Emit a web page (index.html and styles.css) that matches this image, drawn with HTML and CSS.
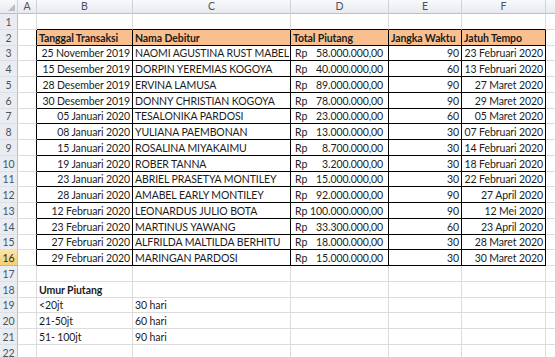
FILE: index.html
```html
<!DOCTYPE html>
<html lang="id">
<head>
<meta charset="utf-8">
<title>Piutang</title>
<link rel="stylesheet" href="styles.css">
</head>
<body>
<table class="sheet">
  <colgroup>
    <col class="c-rn"><col class="c-a"><col class="c-b"><col class="c-c"><col class="c-d"><col class="c-e"><col class="c-f"><col class="c-g">
  </colgroup>
  <thead>
    <tr class="hdr">
      <th class="corner"><span class="tri"></span></th>
      <th>A</th><th>B</th><th>C</th><th>D</th><th>E</th><th>F</th><th></th>
    </tr>
  </thead>
  <tbody>
    <tr><th class="rn">1</th><td></td><td class="bt"></td><td class="bt"></td><td class="bt"></td><td class="bt"></td><td class="bt"></td><td></td></tr>
    <tr><th class="rn">2</th><td class="bl"></td><td class="t h">Tanggal Transaksi</td><td class="t h">Nama Debitur</td><td class="t h">Total Piutang</td><td class="t h">Jangka Waktu</td><td class="t h">Jatuh Tempo</td><td></td></tr>
    <tr class="s"><th class="rn">3</th><td class="bl"></td><td class="t r">25 November 2019</td><td class="t">NAOMI AGUSTINA RUST MABEL</td><td class="t"><div class="acct"><span>Rp</span><span>58.000.000,00</span></div></td><td class="t r">90</td><td class="t r">23 Februari 2020</td><td></td></tr>
    <tr><th class="rn">4</th><td class="bl"></td><td class="t r">15 Desember 2019</td><td class="t">DORPIN YEREMIAS KOGOYA</td><td class="t"><div class="acct"><span>Rp</span><span>40.000.000,00</span></div></td><td class="t r">60</td><td class="t r">13 Februari 2020</td><td></td></tr>
    <tr><th class="rn">5</th><td class="bl"></td><td class="t r">28 Desember 2019</td><td class="t">ERVINA LAMUSA</td><td class="t"><div class="acct"><span>Rp</span><span>89.000.000,00</span></div></td><td class="t r">90</td><td class="t r">27 Maret 2020</td><td></td></tr>
    <tr><th class="rn">6</th><td class="bl"></td><td class="t r">30 Desember 2019</td><td class="t">DONNY CHRISTIAN KOGOYA</td><td class="t"><div class="acct"><span>Rp</span><span>78.000.000,00</span></div></td><td class="t r">90</td><td class="t r">29 Maret 2020</td><td></td></tr>
    <tr class="s"><th class="rn">7</th><td class="bl"></td><td class="t r">05 Januari 2020</td><td class="t">TESALONIKA PARDOSI</td><td class="t"><div class="acct"><span>Rp</span><span>23.000.000,00</span></div></td><td class="t r">60</td><td class="t r">05 Maret 2020</td><td></td></tr>
    <tr><th class="rn">8</th><td class="bl"></td><td class="t r">08 Januari 2020</td><td class="t">YULIANA PAEMBONAN</td><td class="t"><div class="acct"><span>Rp</span><span>13.000.000,00</span></div></td><td class="t r">30</td><td class="t r">07 Februari 2020</td><td></td></tr>
    <tr><th class="rn">9</th><td class="bl"></td><td class="t r">15 Januari 2020</td><td class="t">ROSALINA MIYAKAIMU</td><td class="t"><div class="acct"><span>Rp</span><span>8.700.000,00</span></div></td><td class="t r">30</td><td class="t r">14 Februari 2020</td><td></td></tr>
    <tr><th class="rn">10</th><td class="bl"></td><td class="t r">19 Januari 2020</td><td class="t">ROBER TANNA</td><td class="t"><div class="acct"><span>Rp</span><span>3.200.000,00</span></div></td><td class="t r">30</td><td class="t r">18 Februari 2020</td><td></td></tr>
    <tr class="s"><th class="rn">11</th><td class="bl"></td><td class="t r">23 Januari 2020</td><td class="t">ABRIEL PRASETYA MONTILEY</td><td class="t"><div class="acct"><span>Rp</span><span>15.000.000,00</span></div></td><td class="t r">30</td><td class="t r">22 Februari 2020</td><td></td></tr>
    <tr><th class="rn">12</th><td class="bl"></td><td class="t r">28 Januari 2020</td><td class="t">AMABEL EARLY MONTILEY</td><td class="t"><div class="acct"><span>Rp</span><span>92.000.000,00</span></div></td><td class="t r">90</td><td class="t r">27 April 2020</td><td></td></tr>
    <tr><th class="rn">13</th><td class="bl"></td><td class="t r">12 Februari 2020</td><td class="t">LEONARDUS JULIO BOTA</td><td class="t"><div class="acct"><span>Rp</span><span>100.000.000,00</span></div></td><td class="t r">90</td><td class="t r">12 Mei 2020</td><td></td></tr>
    <tr><th class="rn">14</th><td class="bl"></td><td class="t r">23 Februari 2020</td><td class="t">MARTINUS YAWANG</td><td class="t"><div class="acct"><span>Rp</span><span>33.300.000,00</span></div></td><td class="t r">60</td><td class="t r">23 April 2020</td><td></td></tr>
    <tr class="s"><th class="rn">15</th><td class="bl"></td><td class="t r">27 Februari 2020</td><td class="t">ALFRILDA MALTILDA BERHITU</td><td class="t"><div class="acct"><span>Rp</span><span>18.000.000,00</span></div></td><td class="t r">30</td><td class="t r">28 Maret 2020</td><td></td></tr>
    <tr><th class="rn sel">16</th><td class="bl"></td><td class="t r">29 Februari 2020</td><td class="t">MARINGAN PARDOSI</td><td class="t"><div class="acct"><span>Rp</span><span>15.000.000,00</span></div></td><td class="t r">30</td><td class="t r">30 Maret 2020</td><td></td></tr>
    <tr><th class="rn">17</th><td></td><td></td><td></td><td></td><td></td><td></td><td></td></tr>
    <tr><th class="rn">18</th><td></td><td class="b">Umur Piutang</td><td></td><td></td><td></td><td></td><td></td></tr>
    <tr class="s"><th class="rn">19</th><td></td><td>&lt;20jt</td><td>30 hari</td><td></td><td></td><td></td><td></td></tr>
    <tr><th class="rn">20</th><td></td><td>21-50jt</td><td>60 hari</td><td></td><td></td><td></td><td></td></tr>
    <tr><th class="rn">21</th><td></td><td>51- 100jt</td><td>90 hari</td><td></td><td></td><td></td><td></td></tr>
    <tr><th class="rn">22</th><td></td><td></td><td></td><td></td><td></td><td></td><td></td></tr>
  </tbody>
</table>
</body>
</html>
```
FILE: styles.css
```css
html, body {
  margin: 0;
  padding: 0;
  background: #ffffff;
  overflow: hidden;
}

.sheet {
  border-collapse: separate;
  border-spacing: 0;
  table-layout: fixed;
  width: 566px;
  font-family: "Lato", "Liberation Sans", sans-serif;
  font-size: 10.5px;
  letter-spacing: -0.1px;
  color: #1c1c1c;
}

.c-rn { width: 18px; }
.c-a { width: 19px; }
.c-b { width: 96px; }
.c-c { width: 158px; }
.c-d { width: 98px; }
.c-e { width: 73px; }
.c-f { width: 84px; }
.c-g { width: 20px; }

th, td {
  box-sizing: border-box;
  padding: 0 2px;
  white-space: nowrap;
  overflow: hidden;
}

.hdr th {
  height: 14px;
  font-weight: normal;
  font-size: 10.5px;
  letter-spacing: 0;
  line-height: 13px;
  color: #4a5260;
  text-align: center;
  background: linear-gradient(#f8f9fb, #e6eaef);
  border-right: 1px solid #cdd2d9;
  border-bottom: 1px solid #b9c0c9;
}

.hdr .corner {
  position: relative;
}

.tri {
  position: absolute;
  right: 2px;
  bottom: 2px;
  width: 0;
  height: 0;
  border-left: 7px solid transparent;
  border-bottom: 7px solid #b8bec6;
}

tbody tr { height: 16px; }
tbody tr.s { height: 15px; }

td {
  border-right: 1px solid #dcdcdc;
  border-bottom: 1px solid #dcdcdc;
  line-height: 14px;
  vertical-align: bottom;
}

.rn {
  font-weight: normal;
  font-size: 10.5px;
  letter-spacing: 0;
  line-height: 14px;
  color: #4a5260;
  text-align: center;
  background: #e9edf2;
  border-right: 1px solid #b9c0c9;
  border-bottom: 1px solid #dde1e6;
  padding: 0;
}

.rn.sel {
  background: linear-gradient(#fbe3a8, #f6cf76);
  color: #2e2a20;
  border-bottom-color: #e2b35a;
}

.bt { border-bottom-color: #000; }
.bl { border-right-color: #000; }
.t {
  border-right-color: #000;
  border-bottom-color: #000;
}

.h {
  background: #fabf8f;
  font-weight: bold;
}

.b { font-weight: bold; }
.r { text-align: right; }

.acct {
  display: flex;
  justify-content: space-between;
  padding: 0 3px 0 2px;
}
```
